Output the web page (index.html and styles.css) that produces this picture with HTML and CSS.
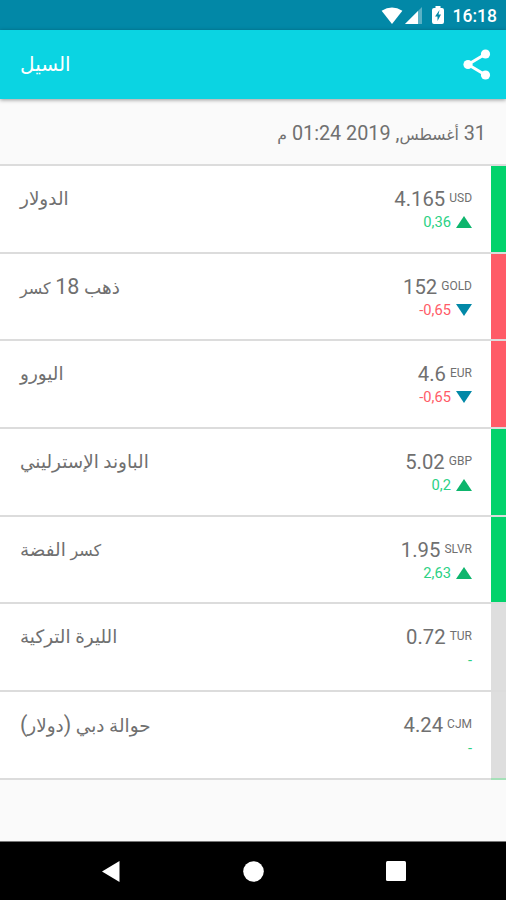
FILE: index.html
```html
<!DOCTYPE html>
<html lang="ar">
<head>
    <meta charset="UTF-8">
    <title>السيل</title>
    <link rel="stylesheet" href="styles.css">
</head>
<body>

<div class="status">
    <svg class="wifi" width="22" height="17" viewBox="0 0 22 18"><path d="M0 4Q11-3 22 4L11 18Z"/></svg>
    <svg class="signal" width="17" height="17" viewBox="0 0 17 17">
        <path class="dim" d="M17 0V17H0Z"/>
        <path d="M13 4V17H0Z"/>
    </svg>
    <svg class="battery" width="12" height="18" viewBox="0 0 12 18">
        <path d="M3.500 0h5v2H10q2 0 2 2v12q0 2-2 2H2q-2 0-2-2V4q0-2 2-2h1.500Z"/>
        <path class="bolt" d="M7.500 4L3 10.500h2.500V15L9 8.500H6.500Z"/>
    </svg>
    <span class="clock">16:18</span>
</div>

<header class="toolbar">
    <h1 dir="rtl">السيل</h1>
    <svg width="28" height="31" viewBox="0 0 28 31">
        <path class="line" d="M22.500 5L5 15.500L22.500 26"/>
        <circle cx="22.500" cy="5" r="4.600"/>
        <circle cx="5" cy="15.500" r="4.600"/>
        <circle cx="22.500" cy="26" r="4.600"/>
    </svg>
</header>

<div class="date" dir="rtl">31 <span>أغسطس</span>, 2019 01:24 <span>م</span></div>

<main class="list">
    <div class="row up">
        <div class="name" dir="rtl">الدولار</div>
        <div class="rate">
            <div class="price">4.165 <span>USD</span></div>
            <div class="change">0,36 <i></i></div>
        </div>
    </div>
    <div class="row down">
        <div class="name" dir="rtl">ذهب <span>18</span> <small>كسر</small></div>
        <div class="rate">
            <div class="price">152 <span>GOLD</span></div>
            <div class="change">-0,65 <i></i></div>
        </div>
    </div>
    <div class="row down">
        <div class="name" dir="rtl">اليورو</div>
        <div class="rate">
            <div class="price">4.6 <span>EUR</span></div>
            <div class="change">-0,65 <i></i></div>
        </div>
    </div>
    <div class="row up">
        <div class="name" dir="rtl">الباوند الإسترليني</div>
        <div class="rate">
            <div class="price">5.02 <span>GBP</span></div>
            <div class="change">0,2 <i></i></div>
        </div>
    </div>
    <div class="row up">
        <div class="name" dir="rtl"><small>كسر</small> الفضة</div>
        <div class="rate">
            <div class="price">1.95 <span>SLVR</span></div>
            <div class="change">2,63 <i></i></div>
        </div>
    </div>
    <div class="row">
        <div class="name" dir="rtl">الليرة التركية</div>
        <div class="rate">
            <div class="price">0.72 <span>TUR</span></div>
            <div class="change">-</div>
        </div>
    </div>
    <div class="row">
        <div class="name" dir="rtl">حوالة دبي <span>(</span>دولار<span>)</span></div>
        <div class="rate">
            <div class="price">4.24 <span>CJM</span></div>
            <div class="change">-</div>
        </div>
    </div>
    <div class="list-end"></div>
</main>

<nav class="navbar">
    <svg width="18" height="21" viewBox="0 0 18 21"><path d="M17.500 0V21L0 10.500Z"/></svg>
    <svg width="21" height="21" viewBox="0 0 21 21"><circle cx="10.500" cy="10.500" r="10.300"/></svg>
    <svg width="20" height="20" viewBox="0 0 20 20"><rect width="20" height="20" rx="1.500"/></svg>
</nav>

</body>
</html>
```
FILE: styles.css
```css
* {
    box-sizing: border-box;
}
body {
    margin: 0;
    height: 900px;
    display: flex;
    flex-direction: column;
    background-color: #fafafa;
    color: #707070;
    font-family: Roboto, "DejaVu Sans", sans-serif;
    overflow: hidden;
}
svg {
    display: block;
    fill: #fff;
}

.status {
    height: 30px;
    display: flex;
    justify-content: flex-end;
    align-items: center;
    padding-right: 9px;
    background-color: #0288a7;
    color: #fff;
}
.wifi {
    margin-right: 2px;
}
.signal .dim {
    opacity: .35;
}
.battery {
    margin-left: 10px;
}
.bolt {
    fill: #0288a7;
}
.clock {
    margin-left: 9px;
    padding-top: 1px;
    font-size: 17.5px;
    font-weight: 500;
}

.toolbar {
    height: 68.5px;
    display: flex;
    justify-content: space-between;
    align-items: center;
    padding: 0 15px 0 20px;
    background-color: #0bd4e2;
    box-shadow: 0 1px 4px rgba(0, 0, 0, .4);
    color: #fff;
}
.toolbar h1 {
    margin: 0;
    font-size: 20px;
    font-weight: normal;
}
.toolbar .line {
    fill: none;
    stroke: #fff;
    stroke-width: 3;
}

.date {
    height: 65.5px;
    padding-right: 20px;
    line-height: 69px;
    font-size: 19.8px;
}
.date span {
    font-size: 15.7px;
}

.row {
    height: 87.67px;
    display: flex;
    justify-content: space-between;
    padding: 20px 0 0 20px;
    background-color: #fff;
    border-top: 2px solid #dcdcdc;
}
/* trend strip on the edge of the row */
.row::after {
    content: "";
    width: 15px;
    margin: -20px 0 0 19px;
    background-color: #dedede;
}
.row.up::after {
    background-color: #02d36c;
}
.row.down::after {
    background-color: #ff5b67;
}
.name {
    margin-right: auto;
    font-size: 18.4px;
    line-height: 26px;
}
.name span {
    font-size: 21.5px;
}
.name small {
    font-size: 16px;
}
.rate {
    text-align: right;
}
.price {
    display: flex;
    justify-content: flex-end;
    gap: 4px;
    font-size: 20.3px;
    line-height: 26px;
}
.price span {
    font-size: 12px;
    line-height: 24px;
}
.change {
    display: flex;
    justify-content: flex-end;
    align-items: center;
    gap: 5px;
    height: 20px;
    color: #2bd184;
    font-size: 14.7px;
}
.down .change {
    color: #ff5b67;
}
.change i {
    border: 8px solid transparent;
    border-top: 0;
    border-bottom: 12px solid #0eb56d;
}
.down .change i {
    border-bottom: 0;
    border-top: 12px solid #0288a7;
}
.list-end {
    height: 2px;
    display: flex;
    justify-content: flex-end;
    background-color: #dcdcdc;
}
.list-end::after {
    content: "";
    width: 15px;
    background-color: #a5e0b8;
}

.navbar {
    height: 59px;
    margin-top: auto;
    display: flex;
    justify-content: space-between;
    align-items: center;
    padding: 0 100px 0 102px;
    background-color: #000;
    border-top: 1px solid #777;
}
```
